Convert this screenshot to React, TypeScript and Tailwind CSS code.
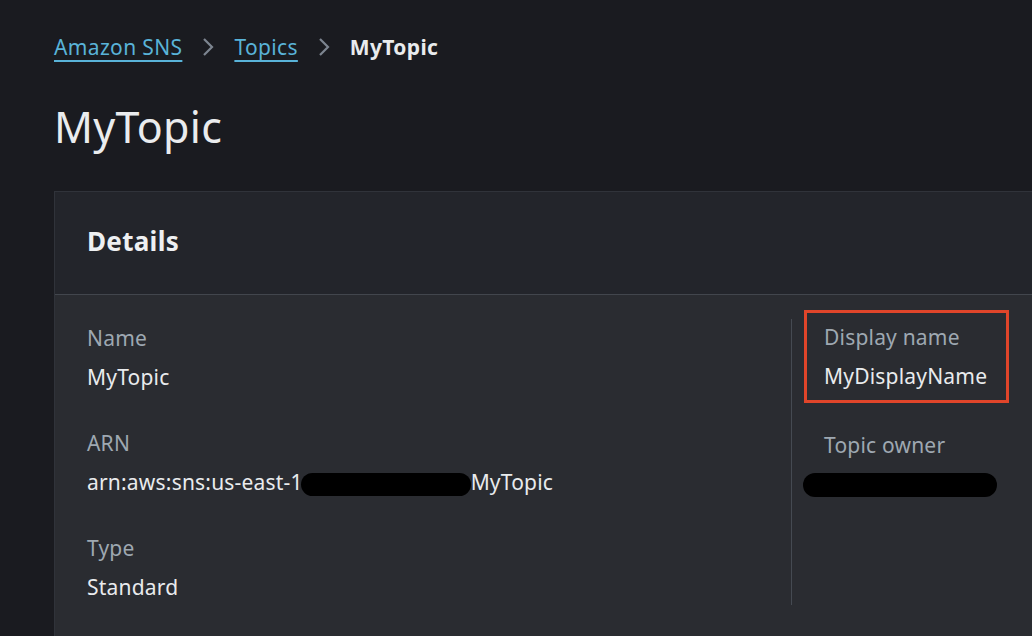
import React from 'react';

const font = { fontFamily: '"Noto Sans", "Open Sans", sans-serif' };

const Chevron: React.FC = () => (
  <svg width="14" height="22" viewBox="0 0 14 22" className="mx-[19px]">
    <path d="M3 3 L11 11 L3 19" fill="none" stroke="#7d8590" strokeWidth="2.2" />
  </svg>
);

const Field: React.FC<{ label: string; children: React.ReactNode }> = ({ label, children }) => (
  <div className="flex flex-col gap-[11px]">
    <div className="text-[21px] leading-[28px] tracking-[0.2px] text-[#9ea8b1]">{label}</div>
    <div className="text-[21px] leading-[28px] tracking-[0.2px] text-[#e9ebed]">{children}</div>
  </div>
);

const Redacted: React.FC<{ className: string }> = ({ className }) => (
  <span className={`inline-block bg-black rounded-full align-middle ${className}`}></span>
);

const App: React.FC = () => {
  return (
    <div className="w-[1032px] h-[636px] overflow-hidden bg-[#1a1b20] pl-[54px]" style={font}>
      <nav className="flex items-center h-[28px] mt-[33px] text-[21px] leading-[28px] tracking-[0.35px]">
        <a href="#" className="text-[#59b3d8] underline decoration-2 underline-offset-[5px]">Amazon SNS</a>
        <Chevron />
        <a href="#" className="text-[#59b3d8] underline decoration-2 underline-offset-[5px]">Topics</a>
        <Chevron />
        <span className="font-bold text-[#e9ebed]">MyTopic</span>
      </nav>
      <h1 className="mt-[41px] text-[43px] leading-[50px] tracking-[0.3px] text-[#eaecee]">MyTopic</h1>
      <div className="mt-[39px] w-[1000px] border-l border-t border-[#30333a] bg-[#2a2c31]">
        <div className="h-[103px] flex items-center px-[32px] pb-[3px] bg-[#23252b] border-b border-[#42464d]">
          <h2 className="text-[26px] font-bold tracking-[0.3px] text-[#eef0f2]">Details</h2>
        </div>
        <div className="flex pt-[29px] h-[400px]">
          <div className="w-[736px] pl-[32px] flex flex-col gap-[38px]">
            <Field label="Name">MyTopic</Field>
            <Field label="ARN">
              <span className="inline-flex items-center">
                arn:aws:sns:us-east-1:
                <Redacted className="w-[170px] h-[23px] -ml-[8px] mt-[4px]" />
                MyTopic
              </span>
            </Field>
            <Field label="Type">Standard</Field>
          </div>
          <div className="w-px h-[286px] -mt-[5px] bg-[#454a52]"></div>
          <div className="pl-[12px] -mt-[14px] flex flex-col gap-[28px]">
            <div className="relative px-[20px] py-[13px] w-[205px]">
              <div className="absolute inset-0 border-[3px] border-[#e0452a]"></div>
              <Field label="Display name">MyDisplayName</Field>
            </div>
            <div className="px-[20px] flex flex-col gap-[14px]">
              <div className="text-[21px] leading-[28px] tracking-[0.2px] text-[#9ea8b1]">Topic owner</div>
              <Redacted className="w-[194px] h-[24px] -ml-[21px]" />
            </div>
          </div>
        </div>
      </div>
    </div>
  );
};

export default App;
